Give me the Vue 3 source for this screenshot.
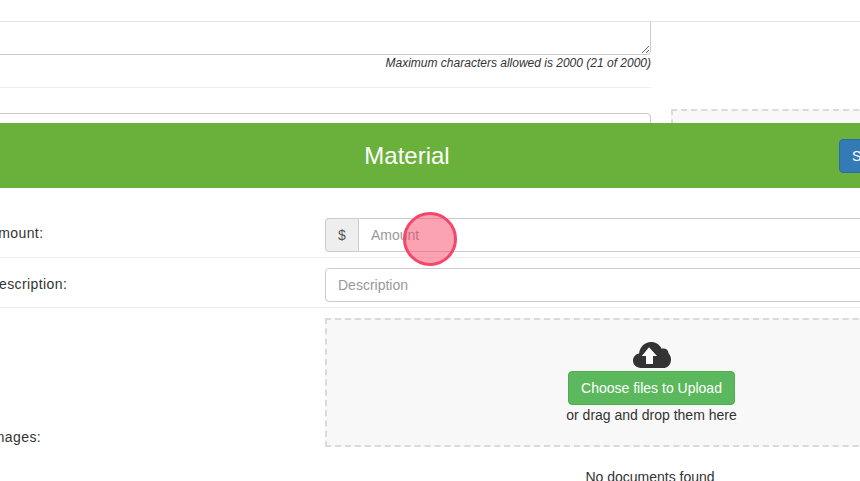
<script setup>
const hint = "Maximum characters allowed is 2000 (21 of 2000)";
</script>

<template>
  <div class="page">
    <div class="back">
      <div class="back-main">
        <textarea class="back-text"></textarea>
        <p class="hint">{{ hint }}</p>
        <hr class="back-rule" />
        <div class="back-input"></div>
      </div>
      <div class="back-drop"></div>
    </div>

    <section class="modal">
      <header class="modal-head">
        <h3 class="modal-title">Material</h3>
        <button class="save-btn" type="button">Save</button>
      </header>
      <div class="modal-body">
        <div class="row first">
          <label class="row-label">Amount:</label>
          <div class="input-group">
            <span class="addon">$</span>
            <input class="field grouped" type="text" placeholder="Amount" />
          </div>
        </div>
        <div class="row second">
          <label class="row-label">Description:</label>
          <input class="field" type="text" placeholder="Description" />
        </div>
        <div class="row images">
          <label class="row-label">Images:</label>
          <div class="dropzone">
            <svg class="cloud" width="38" height="26" viewBox="0 0 38 26" aria-hidden="true">
              <path
                fill="#333"
                d="M8 26C3.4 26 0 22.8 0 18.6 0 14.9 2.6 12 6.1 11.4 6.7 5 11.700 0 18 0c4.700 0 8.700 2.700 10.600 6.800 0.600-0.200 1.200-0.300 1.900-0.300 2.900 0 4.900 2 5 4.800 1.500 1.400 2.500 3.900 2.500 6.100C38 22.600 34.600 26 30 26Z"
              />
              <path fill="#fff" d="M16 5.300 8.800 14H13V22H20V14H24Z" />
            </svg>
            <button class="upload-btn" type="button">Choose files to Upload</button>
            <span class="drop-note">or drag and drop them here</span>
          </div>
        </div>
        <p class="empty">No documents found</p>
      </div>
    </section>

    <div class="click-mark"></div>
  </div>
</template>

<style scoped>
.page {
  position: relative;
  width: 860px;
  height: 481px;
  overflow: hidden;
  background: #fff;
  font-family: "Liberation Sans", Arial, sans-serif;
  font-size: 14px;
  color: #333;
}

.back {
  display: flex;
  align-items: flex-start;
  gap: 20px;
  margin-left: -100px;
  padding-top: 21px;
}

.back::before {
  content: "";
  position: absolute;
  top: 21px;
  left: 0;
  right: 0;
  height: 1px;
  background: #e3e3e3;
}

.back-main {
  width: 751px;
  flex: none;
}

.back-text {
  display: block;
  box-sizing: border-box;
  width: 100%;
  height: 34px;
  margin: 0;
  border: 1px solid #ccc;
  border-radius: 0 0 4px 4px;
  background: #fff;
  resize: vertical;
}

.hint {
  margin: 0;
  height: 17px;
  line-height: 16px;
  font-size: 12px;
  font-style: italic;
  text-align: right;
}

.back-rule {
  margin: 15px 0 25px;
  border: 0;
  border-top: 1px solid #eee;
}

.back-input {
  box-sizing: border-box;
  height: 34px;
  border: 1px solid #ccc;
  border-radius: 4px;
}

.back-drop {
  box-sizing: border-box;
  width: 320px;
  height: 120px;
  flex: none;
  margin-top: 88px;
  border: 2px dashed #dadada;
  background: #f8f8f8;
}

.modal {
  position: absolute;
  top: 123px;
  left: -27px;
  width: 1040px;
  height: 358px;
  background: #fff;
}

.modal-head {
  display: flex;
  align-items: center;
  height: 65px;
  background: #69b13a;
}

.modal-title {
  flex: none;
  width: 866px;
  margin: 0;
  padding-left: 2px;
  box-sizing: border-box;
  font-size: 24px;
  font-weight: 400;
  line-height: 1;
  text-align: center;
  color: #fff;
}

.save-btn {
  height: 34px;
  margin-top: 1px;
  padding: 0 12px;
  border: 1px solid #2e6da4;
  border-radius: 4px;
  background: #337ab7;
  font: inherit;
  color: #fff;
}

.modal-body {
  padding: 20px 0 0 17px;
}

.row {
  display: grid;
  grid-template-columns: 335px 653px;
  align-items: center;
  padding: 10px 0 5px;
  border-bottom: 1px solid #eee;
}

.row.images {
  align-items: end;
  padding-bottom: 0;
  border-bottom: 0;
}

.row-label {
  margin-left: -1.5px;
  line-height: 20px;
  letter-spacing: 0.4px;
}

.first .row-label {
  margin-bottom: 4px;
}

.second .row-label {
  margin-bottom: 2px;
}

.input-group {
  display: flex;
}

.addon {
  box-sizing: border-box;
  width: 33px;
  height: 34px;
  flex: none;
  border: 1px solid #ccc;
  border-right: 0;
  border-radius: 4px 0 0 4px;
  background: #eee;
  line-height: 32px;
  text-align: center;
  color: #555;
}

.field {
  display: block;
  box-sizing: border-box;
  width: 100%;
  height: 34px;
  margin: 0;
  padding: 6px 12px;
  border: 1px solid #ccc;
  border-radius: 4px;
  background: #fff;
  font: inherit;
  color: #555;
}

.field.grouped {
  border-radius: 0 4px 4px 0;
}

.field::placeholder {
  color: #999;
  opacity: 1;
}

.dropzone {
  box-sizing: border-box;
  display: flex;
  flex-direction: column;
  align-items: center;
  height: 129px;
  padding-top: 22px;
  border: 2px dashed #dadada;
  background: #f8f8f8;
}

.cloud {
  display: block;
  margin-left: 1px;
}

.upload-btn {
  width: 167px;
  height: 34px;
  margin-top: 3px;
  padding: 0;
  border: 1px solid #4cae4c;
  border-radius: 4px;
  background: #5cb85c;
  font: inherit;
  color: #fff;
}

.drop-note {
  line-height: 20px;
}

.empty {
  margin: 20px 0 0;
  padding-left: 334px;
  width: 652px;
  line-height: 20px;
  text-align: center;
}

.click-mark {
  position: absolute;
  top: 212px;
  left: 403px;
  box-sizing: border-box;
  width: 54px;
  height: 54px;
  border: 3px solid #f6456a;
  border-radius: 50%;
  background: rgba(248, 72, 104, 0.5);
}
</style>
